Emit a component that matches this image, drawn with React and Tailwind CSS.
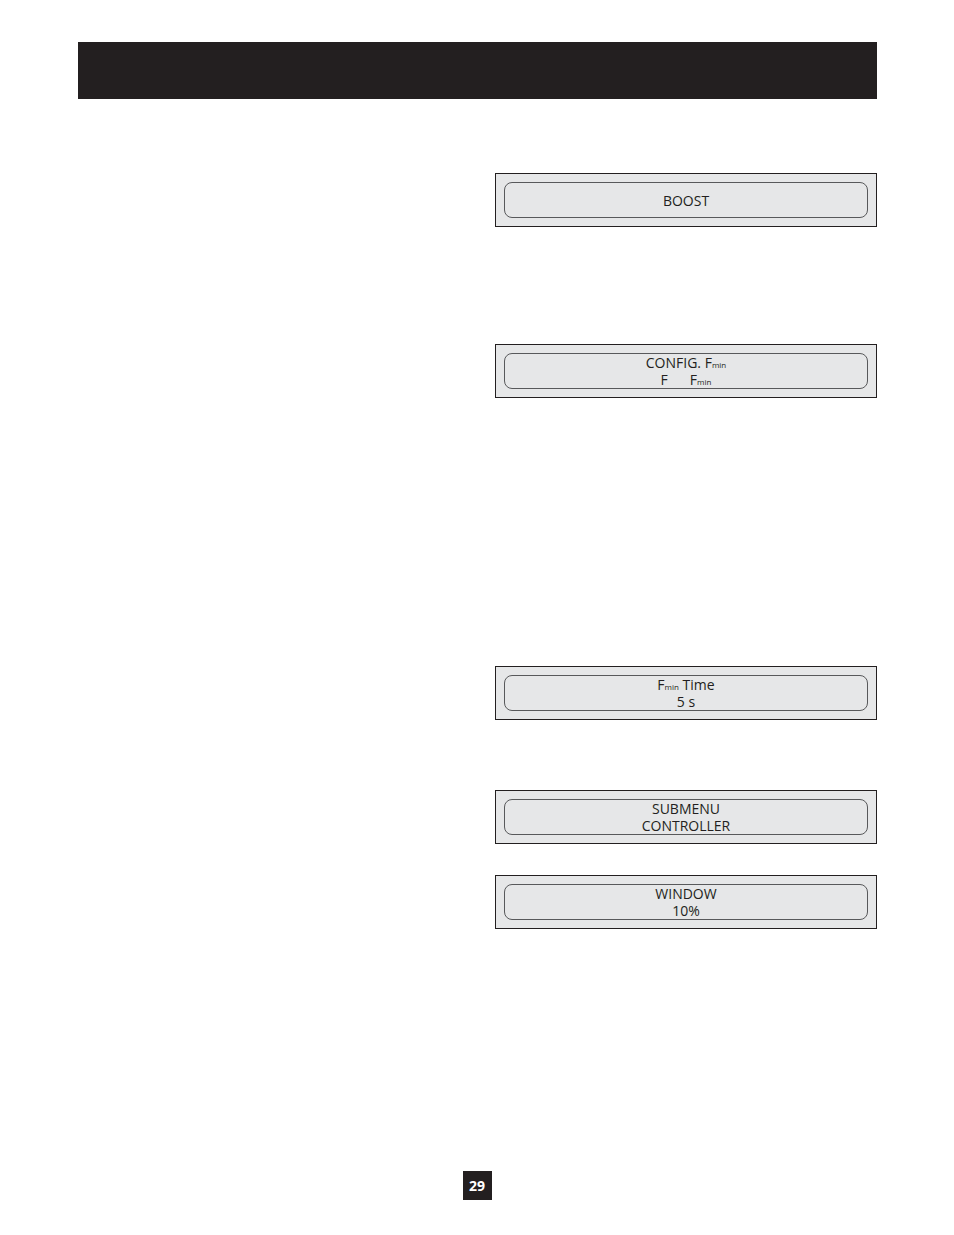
function Fmin() {
  return (
    <>
      F<span className="text-[8px] leading-none">min</span>
    </>
  );
}

function DisplayPanel({ children }) {
  return (
    <div className="border border-[#231f20] bg-[#e6e7e8] px-2 py-2">
      <div className="flex h-9 flex-col items-center justify-center rounded-lg border border-[#58595b] text-center text-sm leading-[17px]">
        {children}
      </div>
    </div>
  );
}

export default function App() {
  return (
    <div className="flex min-h-screen flex-col bg-white px-[77px] pt-[42px] pb-[35px] font-['Open_Sans','Noto_Sans',sans-serif] text-[#231f20]">
      <header className="ml-px h-[57px] bg-[#231f20]" />

      <main className="grid flex-1 grid-cols-[418px_1fr] pt-[74px]">
        <div className="col-start-2 flex flex-col">
          <DisplayPanel>
            <p>BOOST</p>
          </DisplayPanel>

          <div className="mt-[117px]">
            <DisplayPanel>
              <p>
                CONFIG. <Fmin />
              </p>
              <p className="flex gap-[22px]">
                <span>F</span>
                <span>
                  <Fmin />
                </span>
              </p>
            </DisplayPanel>
          </div>

          <div className="mt-[268px]">
            <DisplayPanel>
              <p>
                <Fmin /> Time
              </p>
              <p>5 s</p>
            </DisplayPanel>
          </div>

          <div className="mt-[70px]">
            <DisplayPanel>
              <p>SUBMENU</p>
              <p>CONTROLLER</p>
            </DisplayPanel>
          </div>

          <div className="mt-[31px]">
            <DisplayPanel>
              <p>WINDOW</p>
              <p>10%</p>
            </DisplayPanel>
          </div>
        </div>
      </main>

      <footer className="flex justify-center">
        <span className="flex size-[29px] items-center justify-center bg-[#231f20] text-sm font-bold text-white">
          29
        </span>
      </footer>
    </div>
  );
}
